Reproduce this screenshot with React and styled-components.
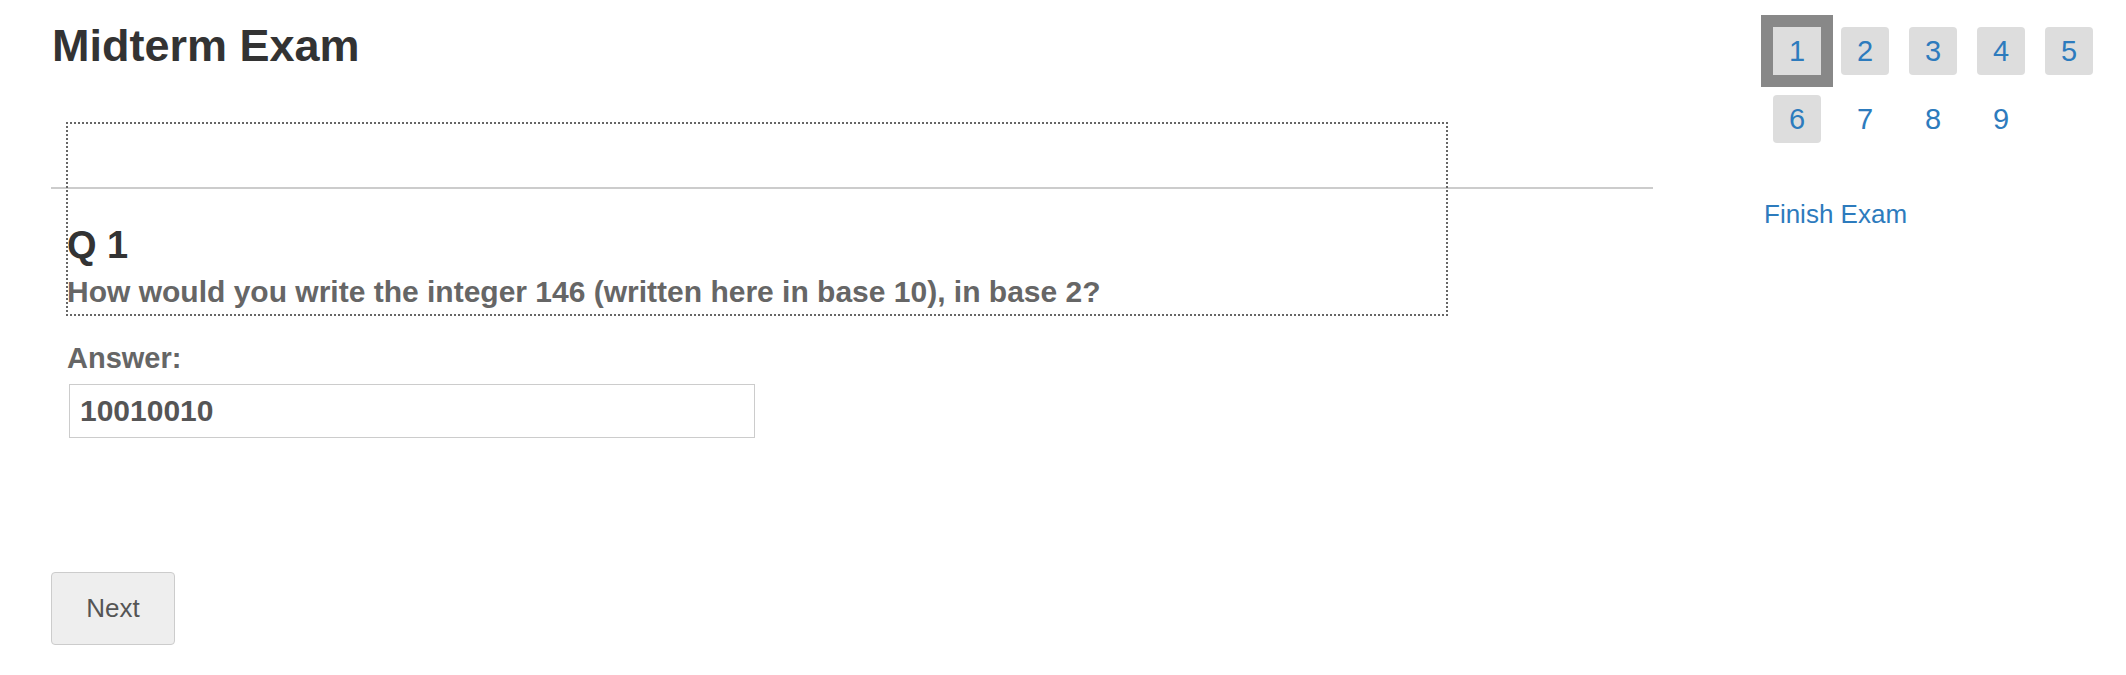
import React from "react";
import styled, { createGlobalStyle } from "styled-components";

const pages = [
  { n: 1, visited: true, current: true },
  { n: 2, visited: true },
  { n: 3, visited: true },
  { n: 4, visited: true },
  { n: 5, visited: true },
  { n: 6, visited: true },
  { n: 7 },
  { n: 8 },
  { n: 9 },
];

const App = () => {
  return (
    <>
      <GlobalStyle />
      <Page>
        <MainColumn>
          <Title>Midterm Exam</Title>

          <QuestionBlock>
            <Divider />
            <QuestionNumber>Q 1</QuestionNumber>
            <QuestionText>
              How would you write the integer 146 (written here in base 10), in base 2?
            </QuestionText>
          </QuestionBlock>

          <AnswerSection>
            <AnswerLabel htmlFor="answer">Answer:</AnswerLabel>
            <AnswerInput id="answer" defaultValue="10010010" />
          </AnswerSection>

          <NextButton type="button">Next</NextButton>
        </MainColumn>

        <SideColumn>
          <PageGrid>
            {pages.map((p) => (
              <PageLink key={p.n} href="#" $visited={p.visited} $current={p.current}>
                {p.n}
              </PageLink>
            ))}
          </PageGrid>
          <FinishLink href="#">Finish Exam</FinishLink>
        </SideColumn>
      </Page>
    </>
  );
};

export default App;

const GlobalStyle = createGlobalStyle`
  body {
    margin: 0;
    background: #fff;
    font-family: "Liberation Sans", Arial, sans-serif;
  }
`;

const Page = styled.div`
  display: flex;
  align-items: flex-start;
`;

const MainColumn = styled.div`
  width: 1602px;
  margin-left: 51px;
  padding-top: 23px;
  display: flex;
  flex-direction: column;
  align-items: flex-start;
`;

const Title = styled.h1`
  margin: 0 0 0 1px;
  font-size: 45px;
  line-height: 45px;
  font-weight: 700;
  color: #333;
`;

/* focus outline is painted over the divider, like the original */
const QuestionBlock = styled.div`
  margin: 54px 0 0 15px;
  width: 1382px;
  box-sizing: border-box;
  padding: 1px 1px 9px;
  outline: 2px dotted #666;
  outline-offset: -2px;
`;

const Divider = styled.hr`
  margin: 64px 0 0 -16px;
  width: 1602px;
  border: 0;
  border-top: 2px solid #ccc;
`;

const QuestionNumber = styled.h2`
  margin: 37px 0 0;
  font-size: 38px;
  line-height: 38px;
  font-weight: 700;
  color: #333;
`;

const QuestionText = styled.p`
  margin: 13px 0 0;
  font-size: 30px;
  line-height: 30px;
  font-weight: 700;
  color: #666;
`;

const AnswerSection = styled.div`
  margin: 28px 0 0 16px;
  display: flex;
  flex-direction: column;
  align-items: flex-start;
`;

const AnswerLabel = styled.label`
  font-size: 29px;
  line-height: 29px;
  font-weight: 700;
  color: #666;
`;

const AnswerInput = styled.input`
  margin: 11px 0 0 2px;
  width: 686px;
  height: 54px;
  box-sizing: border-box;
  border: 1px solid #ccc;
  padding: 0 10px;
  font-family: "Liberation Sans", Arial, sans-serif;
  font-size: 30px;
  font-weight: 700;
  color: #555;
  outline: none;
`;

const NextButton = styled.button`
  margin-top: 134px;
  width: 124px;
  height: 73px;
  box-sizing: border-box;
  background: #eee;
  border: 1px solid #ccc;
  border-radius: 4px;
  font-family: "Liberation Sans", Arial, sans-serif;
  font-size: 26px;
  color: #555;
  cursor: pointer;
`;

const SideColumn = styled.div`
  margin-left: 111px;
  padding-top: 27px;
  display: flex;
  flex-direction: column;
  align-items: flex-start;
`;

const PageGrid = styled.div`
  margin-left: 9px;
  display: grid;
  grid-template-columns: repeat(5, 48px);
  grid-auto-rows: 48px;
  gap: 20px;
`;

const PageLink = styled.a`
  display: flex;
  align-items: center;
  justify-content: center;
  font-size: 29px;
  color: #2d7bbd;
  text-decoration: none;
  border-radius: ${(p) => (p.$current ? "0" : "4px")};
  background: ${(p) => (p.$visited ? "#ddd" : "transparent")};
  outline: ${(p) => (p.$current ? "12px solid #888" : "none")};
`;

const FinishLink = styled.a`
  margin-top: 58px;
  font-size: 26px;
  line-height: 26px;
  color: #2d7bbd;
  text-decoration: none;
`;
